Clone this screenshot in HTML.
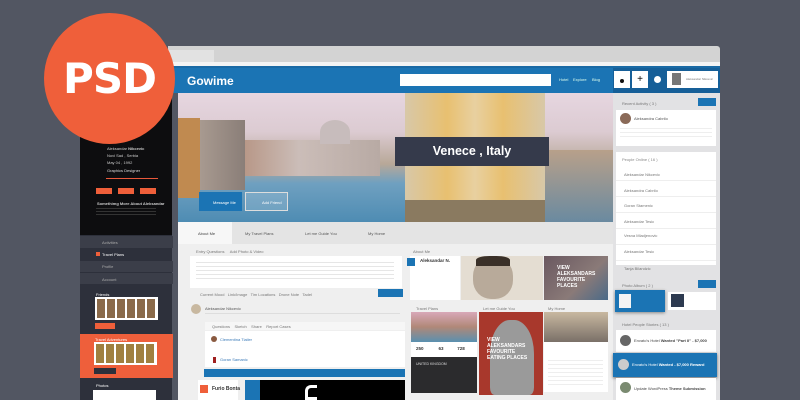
<!DOCTYPE html>
<html><head><meta charset="utf-8"><style>
*{margin:0;padding:0;box-sizing:border-box}
body{width:800px;height:400px;overflow:hidden;background:#525662;font-family:"Liberation Sans",sans-serif;position:relative}
.a{position:absolute}
.t{position:absolute;font-size:4px;color:#777;white-space:nowrap}
</style></head><body>
<!-- browser chrome -->
<div class="a" style="left:168px;top:46px;width:552px;height:20px;background:#d3d3d3;border-radius:0 3px 0 0"></div>
<div class="a" style="left:168px;top:50px;width:46px;height:13px;background:#e2e2e2"></div>
<div class="a" style="left:168px;top:62px;width:552px;height:4px;background:#f4f4f4"></div>
<div class="a" style="left:172px;top:66px;width:548px;height:2px;background:#1a6aa5"></div>
<div class="a" style="left:172px;top:68px;width:548px;height:25px;background:#1b74b4"></div>
<div class="a" style="left:613px;top:68px;width:107px;height:25px;background:#165f98"></div>
<div class="a" style="left:187px;top:74px;color:#fff;font-size:12px;font-weight:bold">Gowime</div>
<div class="a" style="left:400px;top:74px;width:151px;height:12px;background:#fff"></div>
<div class="t" style="left:559px;top:77px;color:#dfe">Hotel</div>
<div class="t" style="left:573px;top:77px;color:#dfe">Explore</div>
<div class="t" style="left:592px;top:77px;color:#dfe">Blog</div>
<div class="a" style="left:614px;top:71px;width:16px;height:17px;background:#fff"></div>
<div class="a" style="left:620px;top:79px;width:4px;height:4px;border-radius:50%;background:#111"></div>
<div class="a" style="left:632px;top:71px;width:16px;height:17px;background:#fff;font-size:10px;text-align:center;line-height:17px">+</div>
<div class="a" style="left:654px;top:76px;width:7px;height:7px;border-radius:50%;background:#fff"></div>
<div class="a" style="left:667px;top:71px;width:51px;height:17px;background:#fff"></div>
<div class="a" style="left:672px;top:73px;width:9px;height:12px;background:#777"></div>
<div class="t" style="left:686px;top:77px;font-size:3px">Aleksandar Nikcevic</div>
<!-- left sidebar -->
<div class="a" style="left:80px;top:93px;width:92px;height:307px;background:#2d303b"></div>
<div class="a" style="left:80px;top:93px;width:92px;height:142px;background:#0d0d0f"></div>
<div class="t" style="left:107px;top:146px;color:#ccc">Aleksandar <b>Nikcevic</b></div>
<div class="t" style="left:107px;top:153px;color:#ccc">Novi Sad , Serbia</div>
<div class="t" style="left:107px;top:160px;color:#ccc">May 04 , 1992</div>
<div class="t" style="left:107px;top:168px;color:#ddd">Graphics Designer</div>
<div class="a" style="left:106px;top:178px;width:52px;height:1px;background:#e8583a"></div>
<div class="a" style="left:96px;top:188px;width:16px;height:6px;background:#ef5f3a"></div>
<div class="a" style="left:118px;top:188px;width:16px;height:6px;background:#ef5f3a"></div>
<div class="a" style="left:140px;top:188px;width:16px;height:6px;background:#ef5f3a"></div>
<div class="t" style="left:97px;top:201px;color:#ccc;font-weight:bold">Somethimg More About Aleksandar</div>
<div class="a" style="left:96px;top:208px;width:60px;height:8px;background:repeating-linear-gradient(#333 0 1px,transparent 1px 3px)"></div>
<div class="a" style="left:80px;top:236px;width:93px;height:12px;background:#3b3e49"></div>
<div class="t" style="left:102px;top:240px;color:#aaa">Activities</div>
<div class="a" style="left:96px;top:252px;width:4px;height:4px;background:#ef5f3a"></div>
<div class="t" style="left:102px;top:252px;color:#fff">Travel Plans</div>
<div class="a" style="left:80px;top:261px;width:93px;height:11px;background:#3b3e49"></div>
<div class="t" style="left:102px;top:264px;color:#aaa">Profile</div>
<div class="a" style="left:80px;top:273px;width:93px;height:11px;background:#3b3e49"></div>
<div class="t" style="left:102px;top:277px;color:#aaa">Account</div>
<div class="t" style="left:96px;top:292px;color:#fff">Friends</div>
<div class="a" style="left:95px;top:297px;width:63px;height:23px;background:#fff"></div>
<div class="a" style="left:97px;top:299px;width:59px;height:19px;background:repeating-linear-gradient(90deg,#8a6a4a 0 8px,#fff 8px 10px)"></div>
<div class="a" style="left:95px;top:323px;width:20px;height:6px;background:#ef5f3a"></div>
<div class="a" style="left:80px;top:334px;width:93px;height:44px;background:#ee5f3b"></div>
<div class="t" style="left:95px;top:337px;color:#fff">Travel Adventures</div>
<div class="a" style="left:94px;top:342px;width:63px;height:23px;background:#fff"></div>
<div class="a" style="left:96px;top:344px;width:59px;height:19px;background:repeating-linear-gradient(90deg,#a08040 0 8px,#fff 8px 10px)"></div>
<div class="a" style="left:94px;top:368px;width:22px;height:6px;background:#2d303b"></div>
<div class="t" style="left:96px;top:383px;color:#fff">Photos</div>
<div class="a" style="left:93px;top:390px;width:63px;height:10px;background:#fff"></div>
<!-- hero -->
<div class="a" style="left:178px;top:93px;width:435px;height:129px;background:linear-gradient(180deg,#e6d6e0 0%,#dccbd2 30%,#b8a898 55%,#6fa0c0 70%,#4e8cb3 100%)"></div>
<div class="a" style="left:178px;top:118px;width:22px;height:80px;background:#c08a50"></div>
<div class="a" style="left:200px;top:120px;width:45px;height:70px;background:linear-gradient(90deg,#a89a90,#8a7e78)"></div>
<div class="a" style="left:245px;top:140px;width:135px;height:36px;background:linear-gradient(90deg,#b89888,#cbbdb8 40%,#b8aaa4)"></div>
<div class="a" style="left:320px;top:120px;width:30px;height:24px;border-radius:50% 50% 0 0;background:#c7bcbc"></div>
<div class="a" style="left:405px;top:93px;width:140px;height:129px;background:linear-gradient(90deg,#d8c8a8,#e8c070 30%,#e8d0a0 50%,#e8c070 70%,#d8c8a8)"></div>
<div class="a" style="left:405px;top:200px;width:140px;height:22px;background:#8a7a60"></div>
<div class="a" style="left:545px;top:150px;width:68px;height:72px;background:linear-gradient(#b8a08a,#6a8aa0)"></div>
<div class="a" style="left:395px;top:137px;width:154px;height:29px;background:#353a4b"></div>
<div class="a" style="left:395px;top:137px;width:154px;height:29px;color:#fff;font-size:12.5px;text-align:center;line-height:29px;font-weight:bold">Venece , Italy</div>
<div class="a" style="left:199px;top:192px;width:43px;height:19px;background:#1b74b4"></div>
<div class="t" style="left:213px;top:200px;color:#fff">Message Me</div>
<div class="a" style="left:245px;top:192px;width:43px;height:19px;border:1px solid #ddd;background:rgba(255,255,255,.15)"></div>
<div class="t" style="left:262px;top:200px;color:#fff">Add Friend</div>
<!-- tabs -->
<div class="a" style="left:178px;top:222px;width:435px;height:178px;background:#efefef"></div>
<div class="a" style="left:178px;top:222px;width:435px;height:22px;background:#e4e4e4"></div>
<div class="a" style="left:178px;top:222px;width:54px;height:22px;background:#f7f7f7"></div>
<div class="t" style="left:198px;top:231px;color:#444">About Me</div>
<div class="t" style="left:245px;top:231px;color:#555">My Travel Plans</div>
<div class="t" style="left:305px;top:231px;color:#555">Let me Guide You</div>
<div class="t" style="left:368px;top:231px;color:#555">My Home</div>
<!-- post -->
<div class="t" style="left:196px;top:249px">Entry Questions &nbsp;&nbsp;&nbsp; Add Photo &amp; Video</div>
<div class="a" style="left:190px;top:256px;width:212px;height:32px;background:#fff"></div>
<div class="a" style="left:196px;top:262px;width:198px;height:18px;background:repeating-linear-gradient(#e6e6e6 0 1px,transparent 1px 4px)"></div>
<div class="t" style="left:200px;top:292px">Current Mood &nbsp; Link/Image &nbsp; Tim Locations &nbsp; Drone Note &nbsp; Tadel</div>
<div class="a" style="left:378px;top:289px;width:25px;height:8px;background:#1b74b4"></div>
<div class="a" style="left:191px;top:304px;width:10px;height:10px;border-radius:50%;background:#c8b8a0"></div>
<div class="t" style="left:205px;top:306px;color:#555">Aleksandar Nikcevic</div>
<div class="a" style="left:205px;top:313px;width:195px;height:1px;background:#ddd"></div>
<div class="a" style="left:205px;top:322px;width:200px;height:8px;background:#f6f6f6"></div>
<div class="t" style="left:212px;top:324px">Questions &nbsp;&nbsp; Sketch &nbsp;&nbsp; Share &nbsp;&nbsp; Report Cases</div>
<div class="a" style="left:205px;top:331px;width:200px;height:36px;background:#fff"></div>
<div class="a" style="left:211px;top:336px;width:6px;height:6px;border-radius:50%;background:#8a5a40"></div>
<div class="t" style="left:220px;top:337px;color:#3a7ab8">Clementina Tiailer</div>
<div class="a" style="left:213px;top:357px;width:3px;height:6px;background:#a02020"></div>
<div class="t" style="left:220px;top:357px;color:#3a7ab8">Goran Samanic</div>
<div class="a" style="left:204px;top:369px;width:201px;height:8px;background:#1b74b4"></div>
<div class="a" style="left:198px;top:380px;width:40px;height:20px;background:#fff"></div>
<div class="a" style="left:200px;top:385px;width:8px;height:8px;background:#ef5f3a"></div>
<div class="t" style="left:212px;top:386px;color:#333;font-size:5px;font-weight:bold">Furio Bonta</div>
<div class="a" style="left:245px;top:380px;width:15px;height:20px;background:#1b74b4"></div>
<div class="a" style="left:260px;top:380px;width:145px;height:20px;background:#000"></div>
<div class="a" style="left:305px;top:385px;width:12px;height:15px;border:3px solid #fff;border-right:none;border-radius:6px 0 0 0"></div>
<!-- cards -->
<div class="t" style="left:413px;top:249px">About Me</div>
<div class="a" style="left:410px;top:256px;width:50px;height:44px;background:#fff"></div>
<div class="a" style="left:407px;top:258px;width:8px;height:8px;background:#1b74b4"></div>
<div class="t" style="left:420px;top:258px;color:#333;font-weight:bold;font-size:4.5px">Aleksandar N.</div>
<div class="a" style="left:461px;top:256px;width:82px;height:44px;background:#e4ddd2"></div>
<div class="a" style="left:473px;top:257px;width:40px;height:42px;border-radius:45%;background:#b8aa9a"></div>
<div class="a" style="left:476px;top:256px;width:34px;height:10px;border-radius:40% 40% 0 0;background:#3a3028"></div>
<div class="a" style="left:544px;top:256px;width:64px;height:44px;background:linear-gradient(135deg,#6a5860,#8a7a78 60%,#4a6a88)"></div>
<div class="a" style="left:557px;top:265px;color:#fff;font-size:5px;font-weight:bold;line-height:6px">VIEW<br>ALEKSANDARS<br>FAVOURITE<br>PLACES</div>
<div class="t" style="left:416px;top:306px">Travel Plans</div><div class="t" style="left:483px;top:306px">Let me Guide You</div><div class="t" style="left:548px;top:306px">My Home</div>
<div class="a" style="left:411px;top:312px;width:66px;height:30px;background:linear-gradient(#d8a8b8,#b08878 50%,#5a90b0)"></div>
<div class="a" style="left:411px;top:342px;width:66px;height:15px;background:#fff"></div>
<div class="t" style="left:416px;top:346px;color:#333;font-weight:bold;font-size:4.5px">250 &nbsp;&nbsp;&nbsp;&nbsp;&nbsp;&nbsp;&nbsp;&nbsp;&nbsp;&nbsp; 63 &nbsp;&nbsp;&nbsp;&nbsp;&nbsp;&nbsp;&nbsp;&nbsp;&nbsp; 728</div>
<div class="a" style="left:411px;top:357px;width:66px;height:36px;background:#2b2b2d"></div>
<div class="t" style="left:416px;top:362px;color:#ddd;font-size:3.5px">UNITED KINGDOM</div>
<div class="a" style="left:479px;top:312px;width:64px;height:83px;background:#a8382c"></div>
<div class="a" style="left:490px;top:320px;width:44px;height:75px;border-radius:45% 45% 10% 10%;background:#9a9a9a"></div>
<div class="a" style="left:487px;top:337px;color:#fff;font-size:5px;font-weight:bold;line-height:6px">VIEW<br>ALEKSANDARS<br>FAVOURITE<br>EATING PLACES</div>
<div class="a" style="left:544px;top:312px;width:64px;height:30px;background:linear-gradient(#c8b8a0,#7a7068)"></div>
<div class="a" style="left:544px;top:342px;width:64px;height:50px;background:#fff"></div>
<div class="a" style="left:548px;top:360px;width:55px;height:25px;background:repeating-linear-gradient(#eee 0 1px,transparent 1px 4px)"></div>
<!-- right column -->
<div class="a" style="left:613px;top:93px;width:107px;height:307px;background:#e2e2e4"></div>
<div class="t" style="left:622px;top:101px">Recent Activity ( 3 )</div>
<div class="a" style="left:698px;top:98px;width:18px;height:8px;background:#1b74b4"></div>
<div class="a" style="left:616px;top:110px;width:100px;height:36px;background:#fff"></div>
<div class="a" style="left:620px;top:113px;width:11px;height:11px;border-radius:50%;background:#8a6a58"></div>
<div class="t" style="left:634px;top:116px;color:#555">Aleksandra Cabrilo</div>
<div class="a" style="left:620px;top:128px;width:92px;height:12px;background:repeating-linear-gradient(#eee 0 1px,transparent 1px 4px)"></div>
<div class="a" style="left:616px;top:152px;width:100px;height:113px;background:#fff"></div>
<div class="t" style="left:622px;top:157px;color:#888">People Online ( 16 )</div>
<div class="a" style="left:616px;top:165px;width:100px;height:100px;background:repeating-linear-gradient(#fff 0 15px,#eee 15px 16px)"></div>
<div class="t" style="left:624px;top:172px">Aleksandar Nikcevic</div>
<div class="t" style="left:624px;top:188px">Aleksandra Cabrilo</div>
<div class="t" style="left:624px;top:203px">Goran Stamenic</div>
<div class="t" style="left:624px;top:219px">Aleksandar Tesic</div>
<div class="t" style="left:624px;top:233px">Vesna Mladjenovic</div>
<div class="t" style="left:624px;top:249px">Aleksandar Tesic</div>
<div class="t" style="left:624px;top:266px">Tanja Bilandzic</div>
<div class="t" style="left:622px;top:283px">Photo Album ( 2 )</div>
<div class="a" style="left:698px;top:280px;width:18px;height:8px;background:#1b74b4"></div>
<div class="a" style="left:615px;top:290px;width:50px;height:22px;background:#1b74b4;box-shadow:0 1px 3px #888"></div>
<div class="a" style="left:619px;top:294px;width:12px;height:14px;background:#f4f4f4"></div>
<div class="a" style="left:668px;top:292px;width:48px;height:18px;background:#fff"></div>
<div class="a" style="left:671px;top:294px;width:13px;height:13px;background:#2d3a50"></div>
<div class="t" style="left:622px;top:322px">Hotel People Stories ( 13 )</div>
<div class="a" style="left:616px;top:330px;width:100px;height:22px;background:#fff"></div>
<div class="a" style="left:620px;top:335px;width:11px;height:11px;border-radius:50%;background:#666"></div>
<div class="t" style="left:634px;top:338px;color:#444">Envato's Hotel <b>Wanted "Part II" - $7,000</b></div>
<div class="a" style="left:613px;top:353px;width:104px;height:24px;background:#1b74b4;box-shadow:0 1px 3px #666"></div>
<div class="a" style="left:618px;top:359px;width:11px;height:11px;border-radius:50%;background:#ccc"></div>
<div class="t" style="left:632px;top:362px;color:#fff">Envato's Hotel <b>Wanted - $7,000 Reward</b></div>
<div class="a" style="left:616px;top:378px;width:100px;height:22px;background:#fff"></div>
<div class="a" style="left:620px;top:382px;width:11px;height:11px;border-radius:50%;background:#7a8a70"></div>
<div class="t" style="left:634px;top:386px;color:#444">Update WordPress <b>Theme Submission</b></div>
<!-- PSD badge -->
<div class="a" style="left:44px;top:13px;width:131px;height:131px;border-radius:50%;background:#ef5f3a"></div>
<div class="a" style="left:44px;top:13px;width:131px;height:131px;line-height:131px;text-align:center;color:#fff;font-size:42px;font-weight:bold;font-family:'DejaVu Sans',sans-serif;letter-spacing:-1px">PSD</div>
</body></html>
